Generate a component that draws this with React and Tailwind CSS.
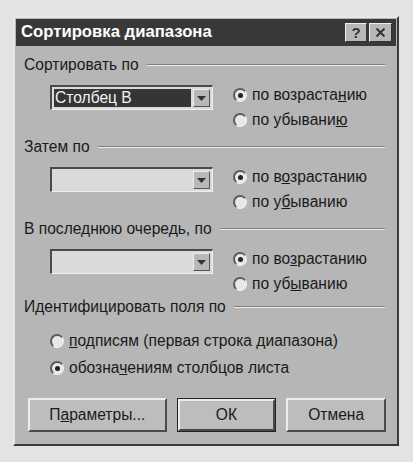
import React from "react";

const font = { fontFamily: '"Liberation Sans", "DejaVu Sans", sans-serif' };

function Radio({ checked, underline }) {
  // underline: [before, letter, after]
  return (
    <div className="flex items-center h-[25px]">
      <span className="relative w-[14px] h-[14px] rounded-full bg-[#e8e8e8] border-t-2 border-l-2 border-[#5a5a5a] border-r border-b border-r-[#f0f0f0] border-b-[#f0f0f0] shrink-0">
        {checked && (
          <span className="absolute left-[3px] top-[3px] w-[5px] h-[5px] rounded-full bg-[#222]" />
        )}
      </span>
      <span className="ml-[5px] text-[15.6px] text-[#1a1a1a] leading-none whitespace-nowrap">
        {underline[0]}
        <span className="underline">{underline[1]}</span>
        {underline[2]}
      </span>
    </div>
  );
}

function Combo({ value }) {
  return (
    <div className="w-[163px] h-[25px] flex border-t-2 border-l-2 border-[#4a4a4a] border-r border-b border-r-[#efefef] border-b-[#efefef] bg-[#dadada]">
      <div className="flex-1 flex items-center p-[2px]">
        {value && (
          <div className="w-full h-full bg-[#353535] text-[#f2f2f2] text-[15.6px] flex items-center pl-[1px] leading-none">
            {value}
          </div>
        )}
      </div>
      <div className="w-[17px] my-[2px] mr-[2px] bg-[#b8b8b8] border-t border-l border-[#eeeeee] border-r border-b border-r-[#555] border-b-[#555] flex items-center justify-center">
        <svg width="9" height="5" viewBox="0 0 9 5">
          <path d="M0 0 H9 L4.5 5 Z" fill="#333" />
        </svg>
      </div>
    </div>
  );
}

function GroupLabel({ children }) {
  return (
    <div className="flex items-center h-[20px]">
      <span className="text-[15.6px] text-[#1a1a1a] leading-none whitespace-nowrap">{children}</span>
      <div className="flex-1 ml-[8px] mr-[1px] border-t border-[#808080] border-b border-b-[#ececec]" />
    </div>
  );
}

function SortGroup({ label, value, asc, desc, height }) {
  return (
    <div className={"flex flex-col " + height}>
      <GroupLabel>{label}</GroupLabel>
      <div className="flex mt-[7px]">
        <div className="ml-[26px] mt-[3px]">
          <Combo value={value} />
        </div>
        <div className="ml-[20px] flex flex-col">
          <Radio checked underline={asc} />
          <Radio underline={desc} />
        </div>
      </div>
    </div>
  );
}

function Button({ children, wide, isDefault }) {
  return (
    <div
      className={
        "h-[34px] flex " +
        (isDefault ? "border border-[#222]" : "") +
        (wide ? " w-[139px]" : " w-[100px]")
      }
    >
      <div className="flex-1 flex items-center justify-center bg-[#bdbdbd] border-t-2 border-l-2 border-[#ececec] border-r-2 border-b-2 border-r-[#4a4a4a] border-b-[#4a4a4a] text-[15.6px] text-[#1a1a1a] leading-none">
        {children}
      </div>
    </div>
  );
}

export default function App() {
  return (
    <div className="w-[413px] h-[462px] bg-[#e3e3e3] pt-[16px] pl-[13px]" style={font}>
      <div className="w-[386px] h-[430px] bg-[#b6b6b6] border-t-2 border-l-2 border-[#e8e8e8] border-r-2 border-b-2 border-r-[#3a3a3a] border-b-[#3a3a3a] flex flex-col p-[1px]">
        {/* title bar */}
        <div className="h-[27px] bg-[#383838] flex items-center pl-[5px] pr-[4px]">
          <span className="text-white font-bold text-[16.7px] leading-none flex-1 whitespace-nowrap">Сортировка диапазона</span>
          <div className="w-[22px] h-[19px] bg-[#b8b8b8] border-t border-l border-[#eeeeee] border-r border-b border-r-[#333] border-b-[#333] flex items-center justify-center text-[15px] font-bold text-[#333] leading-none">
            ?
          </div>
          <div className="w-[23px] h-[19px] ml-[2px] bg-[#b8b8b8] border-t border-l border-[#eeeeee] border-r border-b border-r-[#333] border-b-[#333] flex items-center justify-center">
            <svg width="11" height="9" viewBox="0 0 11 9">
              <path d="M1.5 0.5 L9.5 8.5 M9.5 0.5 L1.5 8.5" stroke="#333" strokeWidth="2" />
            </svg>
          </div>
        </div>

        <div className="flex flex-col pl-[8px] pr-[10px] pt-[9px]">
          <SortGroup
            height="h-[82px]"
            label="Сортировать по"
            value="Столбец B"
            asc={["по возраста", "н", "ию"]}
            desc={["по убывани", "ю", ""]}
          />
          <SortGroup
            height="h-[82px]"
            label="Затем по"
            asc={["по в", "о", "зрастанию"]}
            desc={["по у", "б", "ыванию"]}
          />
          <SortGroup
            height="h-[78px]"
            label="В последнюю очередь, по"
            asc={["по во", "з", "растанию"]}
            desc={["по уб", "ы", "ванию"]}
          />

          <div className="flex flex-col">
            <GroupLabel>Идентифицировать поля по</GroupLabel>
            <div className="flex flex-col ml-[26px] mt-[10px]">
              <div className="h-[27px] flex items-center">
                <Radio underline={["", "п", "одписям (первая строка диапазона)"]} />
              </div>
              <div className="h-[27px] flex items-center">
                <Radio checked underline={["обозна", "ч", "ениям столбцов листа"]} />
              </div>
            </div>
          </div>

          <div className="flex mt-[17px] ml-[4px] gap-[10px]">
            <Button wide>
              П<span className="underline">а</span>раметры...
            </Button>
            <Button isDefault>ОК</Button>
            <Button>Отмена</Button>
          </div>
        </div>
      </div>
    </div>
  );
}
